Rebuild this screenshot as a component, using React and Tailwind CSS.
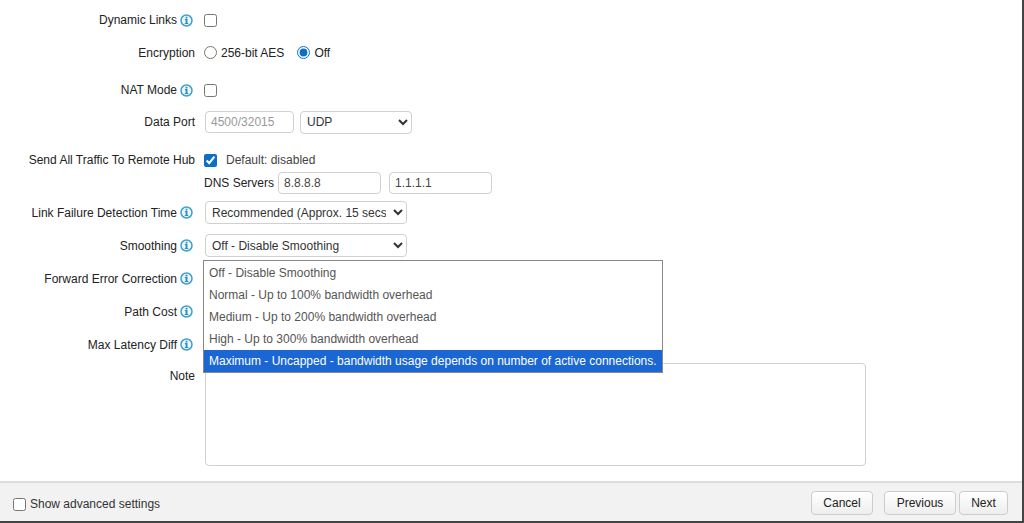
import React, { useState } from 'react';

const smoothingOptions = [
  'Off - Disable Smoothing',
  'Normal - Up to 100% bandwidth overhead',
  'Medium - Up to 200% bandwidth overhead',
  'High - Up to 300% bandwidth overhead',
  'Maximum - Uncapped - bandwidth usage depends on number of active connections.',
];

const inputClass = 'h-[22px] rounded border border-[#d0d0d0] bg-white px-[5px] text-[#444]';
const selectClass = 'h-[23px] rounded border border-[#d0d0d0] bg-white pr-1 pl-0.5 text-[#333]';
const checkClass = 'size-[13px] accent-[#0b6fc8]';
const buttonClass =
  'h-6 rounded-sm border border-[#ccc] bg-linear-to-b from-white to-[#eee] font-medium text-[#222]';

const InfoIcon = () => (
  <svg width="13" height="13" viewBox="0 0 13 13" className="mr-0.5 shrink-0" aria-hidden="true">
    <circle cx="6.5" cy="6.5" r="5.5" fill="#eef8fc" stroke="#3f9fc9" strokeWidth="1.5" />
    <path d="M5.6 2.8h1.9v1.6H5.6zM4.9 5.1h2.6v3.8h.8v1.2H4.8V8.900h.8V6.300h-.7z" fill="#2f8fbd" />
  </svg>
);

const Row = ({ label, htmlFor, info, className = 'h-8 gap-[9px]', children }) => (
  <div className={`flex items-center ${className}`}>
    <div className="flex w-[195px] shrink-0 items-center justify-end gap-[3px] text-[#222]">
      <label htmlFor={htmlFor}>{label}</label>
      {info && <InfoIcon />}
    </div>
    {children}
  </div>
);

const App = () => {
  const [smoothing, setSmoothing] = useState(smoothingOptions[0]);
  const [active, setActive] = useState(4);

  return (
    <div className="flex min-h-screen flex-col border-r-2 border-b-2 border-[#444] bg-white font-['Liberation_Sans',Arial,sans-serif] text-[12px] leading-4 text-[#444]">
      <form className="flex grow flex-col pt-1 pb-3.5">
        <Row label="Dynamic Links" htmlFor="dynamic" info>
          <input id="dynamic" type="checkbox" className={checkClass} />
        </Row>
        <Row label="Encryption" className="h-[33px] gap-[9px]">
          <div className="flex items-center gap-[13px] text-[#222]">
            <label className="flex items-center gap-1">
              <input type="radio" name="encryption" className={checkClass} />
              256-bit AES
            </label>
            <label className="flex items-center gap-1">
              <input type="radio" name="encryption" defaultChecked className={checkClass} />
              Off
            </label>
          </div>
        </Row>
        <Row label="NAT Mode" htmlFor="nat" info className="mt-[5px] h-8 gap-[9px]">
          <input id="nat" type="checkbox" className={checkClass} />
        </Row>
        <Row label="Data Port" htmlFor="port" className="h-8 gap-2.5">
          <div className="flex items-center gap-1.5">
            <input id="port" placeholder="4500/32015" className={`w-[89px] placeholder:text-[#999] ${inputClass}`} />
            <select aria-label="Protocol" className={`w-28 ${selectClass}`}>
              <option>UDP</option>
              <option>TCP</option>
            </select>
          </div>
        </Row>

        <Row label="Send All Traffic To Remote Hub" htmlFor="sendall" className="mt-2.5 h-6 gap-[9px]">
          <input id="sendall" type="checkbox" defaultChecked className={checkClass} />
          <span>Default: disabled</span>
        </Row>
        <div className="flex h-[22px] items-center gap-2 pl-[204px]">
          <label htmlFor="dns1" className="-mr-1 text-[#222]">DNS Servers</label>
          <input id="dns1" defaultValue="8.8.8.8" className={`w-[103px] ${inputClass}`} />
          <input aria-label="Secondary DNS" defaultValue="1.1.1.1" className={`w-[103px] ${inputClass}`} />
        </div>

        <Row label="Link Failure Detection Time" htmlFor="failure" info className="mt-0.5 h-[33px] gap-2.5">
          <select id="failure" className={`w-[202px] ${selectClass}`}>
            <option>Recommended (Approx. 15 secs)</option>
          </select>
        </Row>
        <Row label="Smoothing" htmlFor="smoothing" info className="h-[33px] gap-2.5">
          <div className="relative">
            <select
              id="smoothing"
              value={smoothing}
              onChange={(e) => setSmoothing(e.target.value)}
              className={`w-[202px] ${selectClass}`}
            >
              {smoothingOptions.map((option) => (
                <option key={option}>{option}</option>
              ))}
            </select>
            {/* Open option list */}
            <ul
              role="listbox"
              aria-label="Smoothing"
              className="absolute top-full -left-0.5 z-10 mt-[3px] w-[460px] border border-[#888] bg-white pt-px text-[#555]"
            >
              {smoothingOptions.map((option, index) => (
                <li
                  key={option}
                  role="option"
                  aria-selected={index === active}
                  onMouseEnter={() => setActive(index)}
                  onClick={() => setSmoothing(option)}
                  className={`flex h-[22px] items-center px-[5px] whitespace-nowrap ${index === active ? 'bg-[#1a66d2] text-white' : ''}`}
                >
                  {option}
                </li>
              ))}
            </ul>
          </div>
        </Row>
        <Row label="Forward Error Correction" info className="h-[33px]" />
        <Row label="Path Cost" info className="h-[33px]" />
        <Row label="Max Latency Diff" info className="h-[33px]" />
        <div className="flex gap-2.5 pt-0.5">
          <label htmlFor="note" className="w-[195px] shrink-0 pt-[5px] text-right text-[#222]">Note</label>
          <textarea id="note" className="mr-[156px] h-[103px] grow resize-none rounded border border-[#d0d0d0] px-1.5 py-1" />
        </div>
      </form>

      <footer className="flex items-center border-t-2 border-[#ddd] bg-[#f2f2f2] pt-2 pr-3.5 pb-1.5 pl-[13px]">
        <label className="flex items-center gap-1 pt-0.5 text-[#333]">
          <input type="checkbox" className={checkClass} />
          Show advanced settings
        </label>
        <button type="button" className={`mr-[11px] ml-auto w-[62px] ${buttonClass}`}>Cancel</button>
        <button type="button" className={`mr-[3px] w-[72px] ${buttonClass}`}>Previous</button>
        <button type="button" className={`w-[49px] ${buttonClass}`}>Next</button>
      </footer>
    </div>
  );
};

export default App;
